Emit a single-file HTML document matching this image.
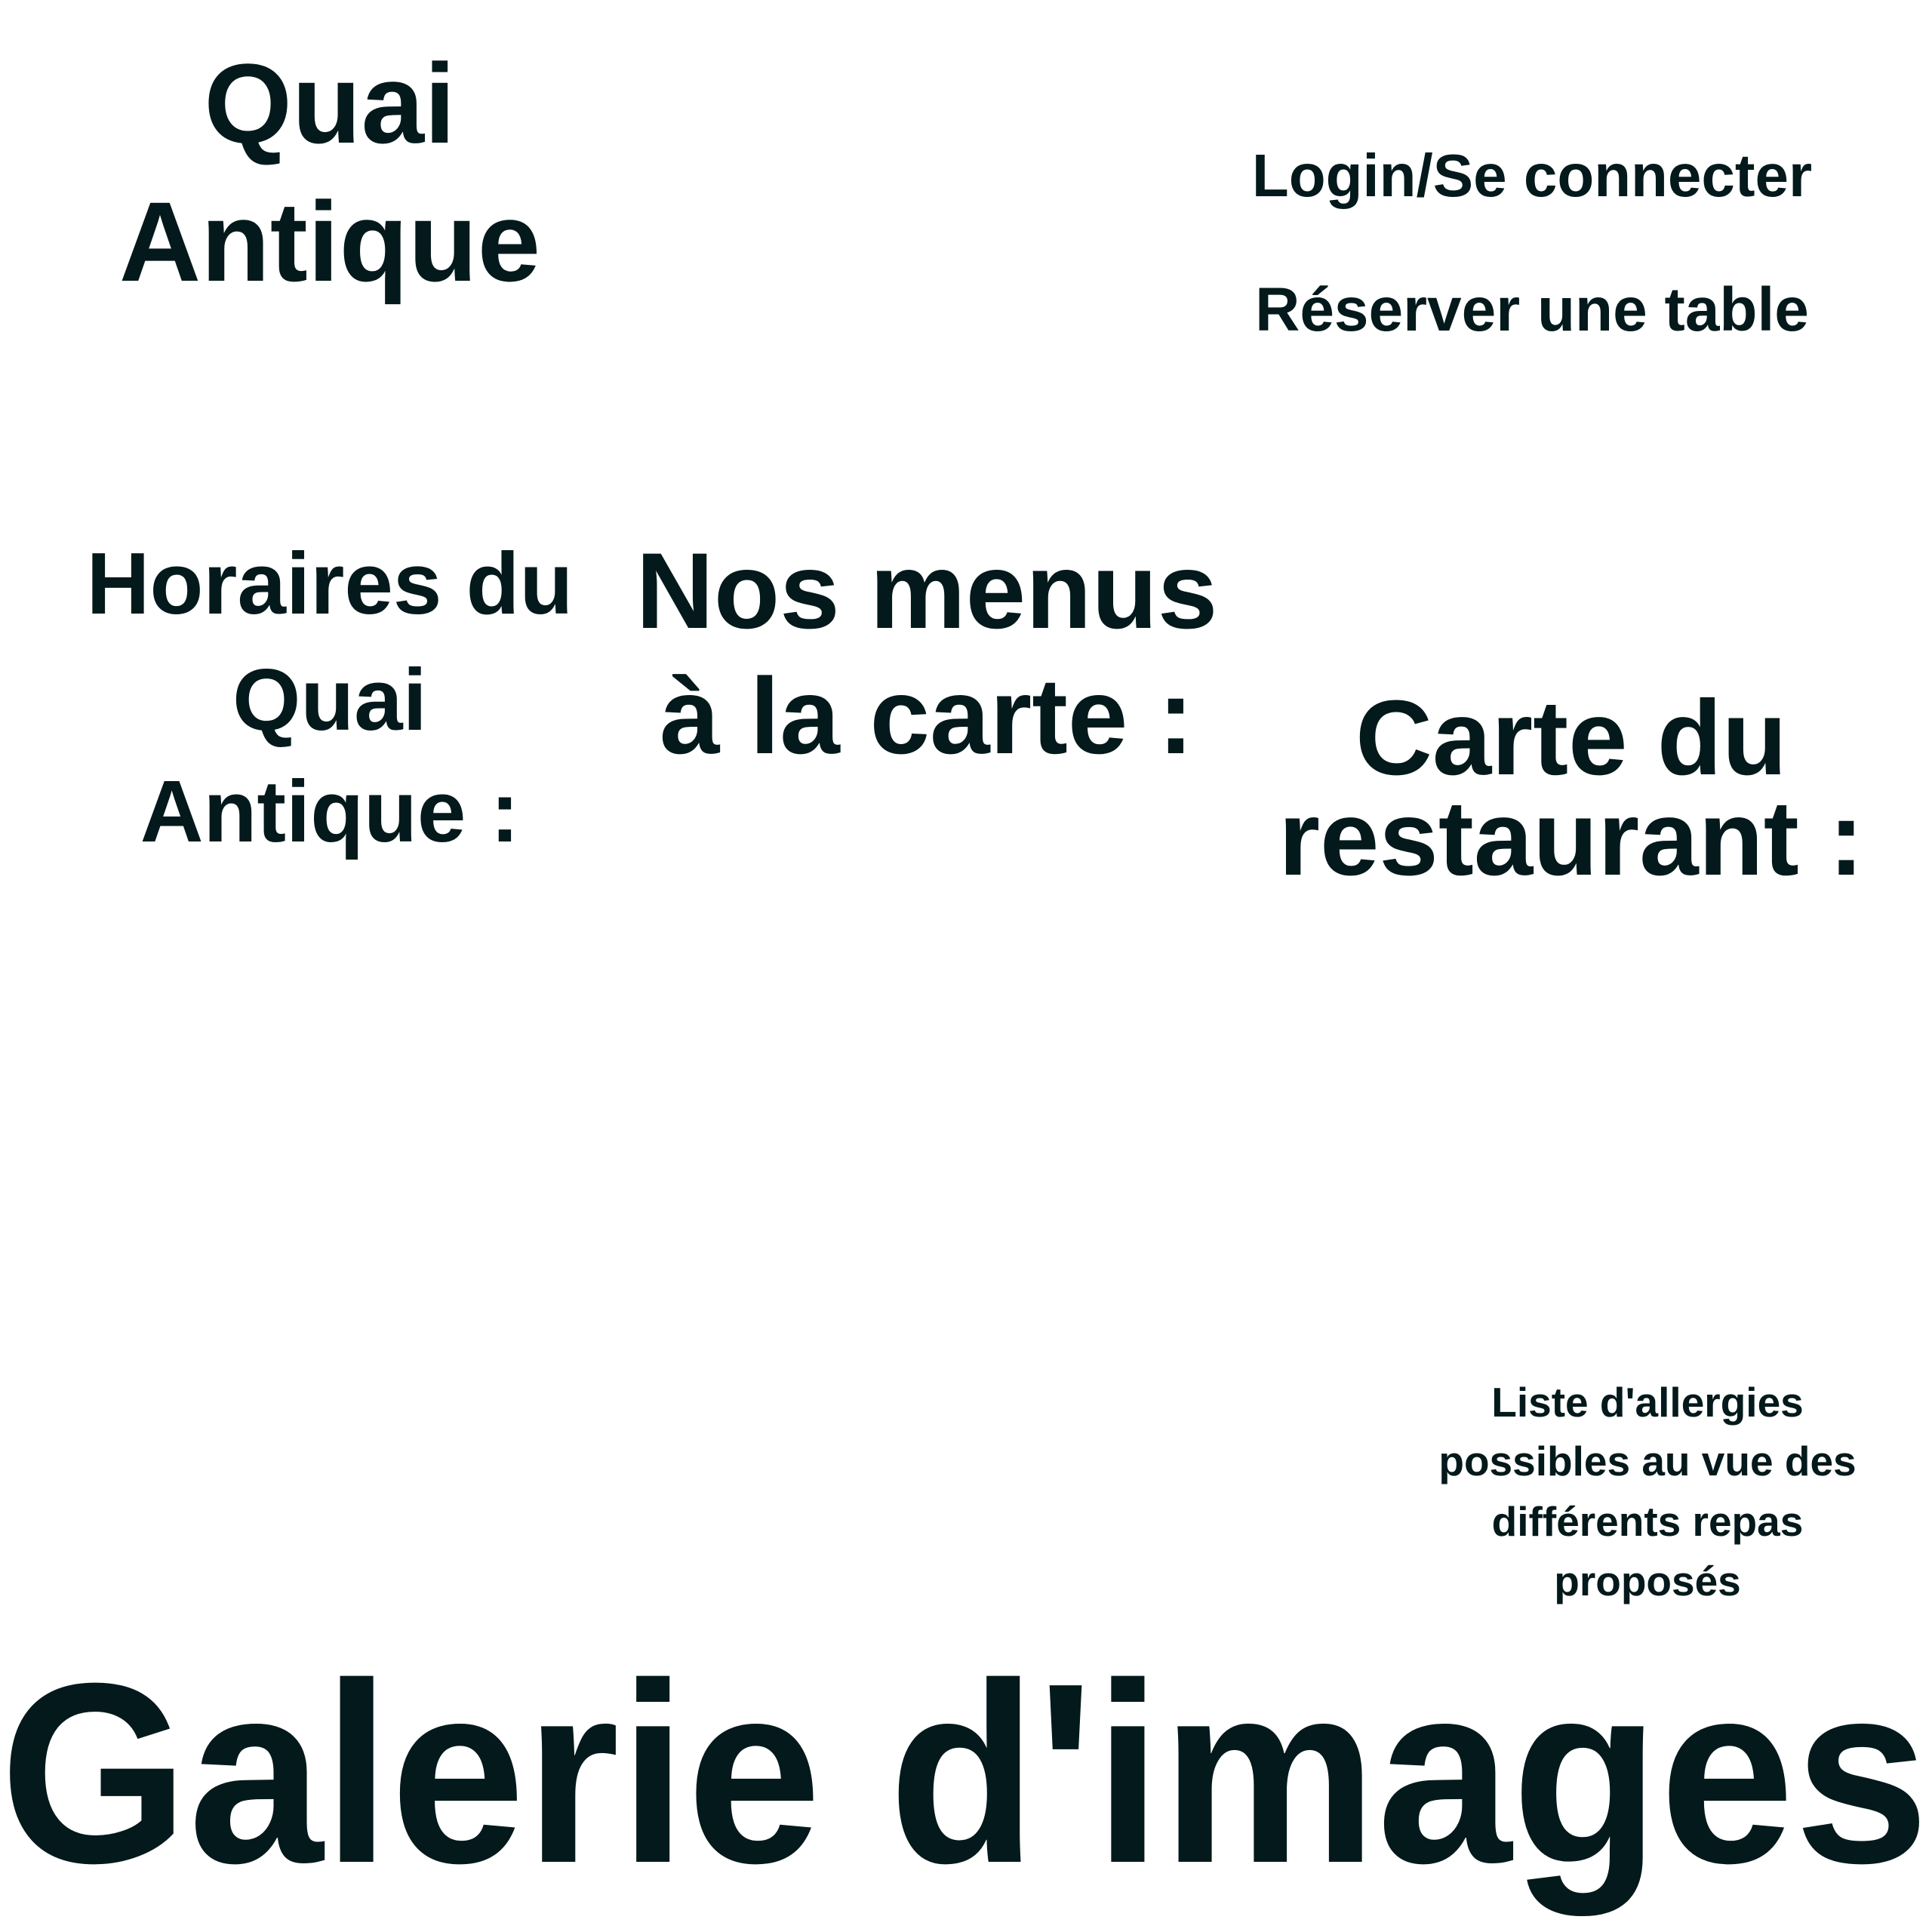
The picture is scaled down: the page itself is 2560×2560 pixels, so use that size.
<!DOCTYPE html>
<html><head><meta charset="utf-8"><style>
html,body{margin:0;padding:0;background:#fff;width:2560px;height:2560px;overflow:hidden;position:relative}
.t{position:absolute;font-family:"Liberation Sans",sans-serif;font-weight:bold;color:#04191b;line-height:1;white-space:nowrap;transform:translateX(-50%)}
</style></head><body>
<div class="t" style="left:437px;top:62px;font-size:150px">Quai</div>
<div class="t" style="left:437px;top:245px;font-size:150px">Antique</div>
<div class="t" style="left:2030px;top:193px;font-size:80px">Login/Se connecter</div>
<div class="t" style="left:2030px;top:370px;font-size:82px">Réserver une table</div>
<div class="t" style="left:437px;top:715px;font-size:116px">Horaires du</div>
<div class="t" style="left:437px;top:869px;font-size:116px">Quai</div>
<div class="t" style="left:437px;top:1017px;font-size:116px">Antique :</div>
<div class="t" style="left:1228px;top:712px;font-size:143px">Nos menus</div>
<div class="t" style="left:1228px;top:878px;font-size:143px">à la carte :</div>
<div class="t" style="left:2082px;top:907px;font-size:141px">Carte du</div>
<div class="t" style="left:2082px;top:1040px;font-size:141px">restaurant :</div>
<div class="t" style="left:2183px;top:1831px;font-size:55px">Liste d'allergies</div>
<div class="t" style="left:2183px;top:1909px;font-size:55px">possibles au vue des</div>
<div class="t" style="left:2183px;top:1989px;font-size:55px">différents repas</div>
<div class="t" style="left:2183px;top:2068px;font-size:55px">proposés</div>
<div class="t" style="left:0;top:2180px;font-size:340px;transform:scaleX(0.944);transform-origin:left top">Galerie d'images</div>
</body></html>
